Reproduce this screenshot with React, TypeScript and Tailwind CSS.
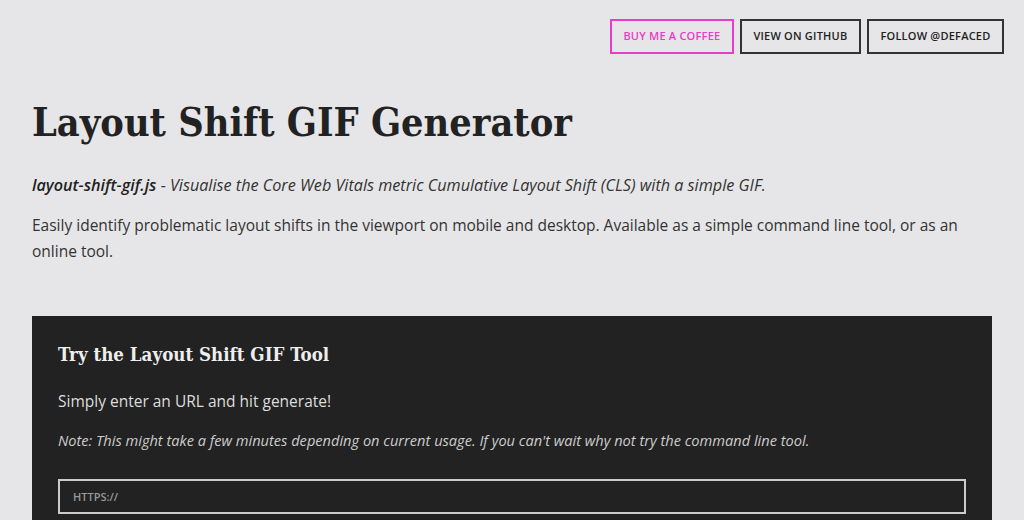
const serif = "font-['DejaVu_Serif_Condensed','DejaVu_Serif',serif] font-stretch-condensed";

function TopButton({ label, accent }: { label: string; accent?: boolean }) {
  return (
    <a
      href="#"
      className={`flex h-[35px] items-center border-2 px-[11.5px] text-[11px] font-semibold uppercase tracking-[0.02em] ${
        accent ? "border-[#e83dc8] text-[#e83dc8]" : "border-[#333] text-[#222]"
      }`}
    >
      {label}
    </a>
  );
}

export default function App() {
  return (
    <div className="min-h-[520px] bg-[#e6e6e8] font-['Open_Sans',sans-serif] text-[#222]">
      <header className="flex justify-end gap-[6px] pr-[20px] pt-[19px]">
        <TopButton label="Buy me a coffee" accent />
        <TopButton label="View on GitHub" />
        <TopButton label="Follow @defaced" />
      </header>

      <main className="px-[32px]">
        <h1 className={`${serif} mt-[40px] text-[39.3px] font-bold leading-[56px] text-[#222]`}>
          Layout Shift GIF Generator
        </h1>

        <p className="mt-[22px] text-[16.2px] italic leading-[26px] text-[#333]">
          <strong className="font-semibold text-[#222]">layout-shift-gif.js</strong> - Visualise the Core Web Vitals
          metric Cumulative Layout Shift (CLS) with a simple GIF.
        </p>
        <p className="mt-[14px] text-[15.5px] leading-[26px] text-[#333]">
          Easily identify problematic layout shifts in the viewport on mobile and desktop. Available as a simple command
          line tool, or as an online tool.
        </p>

        <section className="mt-[52px] bg-[#222] px-[26px] pb-[20px] pt-[25px]">
          <h2 className={`${serif} text-[18.6px] font-bold leading-[28px] text-[#eee]`}>Try the Layout Shift GIF Tool</h2>
          <p className="mt-[19px] text-[15.5px] leading-[26px] text-[#ddd]">Simply enter an URL and hit generate!</p>
          <p className="mt-[14px] text-[14.6px] italic leading-[24px] text-[#ccc]">
            Note: This might take a few minutes depending on current usage. If you can't wait why not try the command
            line tool.
          </p>
          <input
            type="text"
            placeholder="HTTPS://"
            className="mt-[27px] block h-[35px] w-full border-2 border-[#ccc] bg-transparent px-[13px] text-[11px] font-semibold uppercase text-[#ddd] outline-none placeholder:text-[#999]"
          />
        </section>
      </main>
    </div>
  );
}
